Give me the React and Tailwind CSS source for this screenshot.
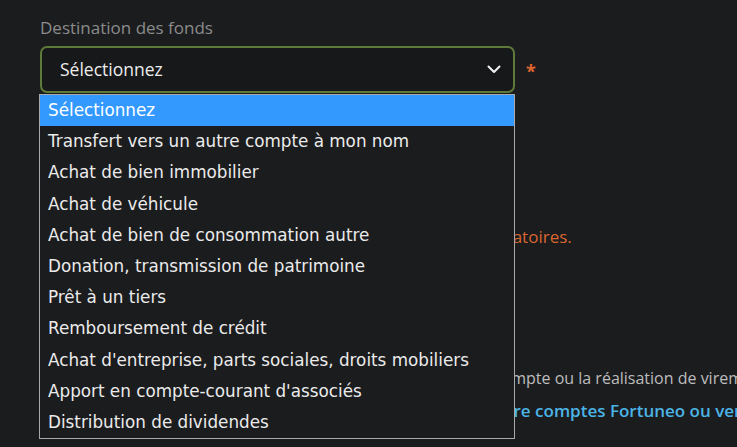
import React from "react";

const options = [
  "Sélectionnez",
  "Transfert vers un autre compte à mon nom",
  "Achat de bien immobilier",
  "Achat de véhicule",
  "Achat de bien de consommation autre",
  "Donation, transmission de patrimoine",
  "Prêt à un tiers",
  "Remboursement de crédit",
  "Achat d'entreprise, parts sociales, droits mobiliers",
  "Apport en compte-courant d'associés",
  "Distribution de dividendes",
];

export default function App() {
  return (
    <div
      className="relative w-[737px] h-[447px] overflow-hidden bg-[#1b1c1e] text-[#e6e6e6]"
      style={{ fontFamily: '"Open Sans", "Noto Sans", sans-serif' }}
    >
      <div className="pl-[40px] pt-[16px]">
        <div className="text-[17px] leading-[24px] text-[#8b8b8b]">Destination des fonds</div>
        <div className="mt-[6px] flex items-center">
          <div className="flex h-[47px] w-[475px] items-center justify-between rounded-[7px] border-2 border-[#5d7a3a] bg-[#17181a]">
            <span className="ml-[18px] text-[17.5px] text-[#ececec]">Sélectionnez</span>
            <svg className="mr-[12px]" width="14" height="9" viewBox="0 0 14 9" fill="none">
              <path d="M1.5 1.5 L7 7 L12.5 1.5" stroke="#f2f2f2" strokeWidth="2" strokeLinecap="round" strokeLinejoin="round" />
            </svg>
          </div>
          <span className="ml-[11px] mt-[3px] text-[18px] font-bold text-[#e0652e]">*</span>
        </div>
        <div className="mt-[132px] text-[17px] leading-[24px] text-[#d8662f] whitespace-nowrap">
          Attention, tous les champs munis d'un astérisque sont obligatoires.
        </div>
        <div className="mt-[117px] text-[16px] leading-[24px] text-[#bdbdbd] whitespace-nowrap">
          Ce service en ligne reste indispensable pour l'ouverture d'un compte ou la réalisation de virements
        </div>
        <div className="mt-[9px] text-[17px] leading-[24px] font-semibold text-[#4bb4e6] whitespace-nowrap">
          Découvrez ici les plafonds applicables à vos virements entre comptes Fortuneo ou vers un tiers
        </div>
      </div>

      <ul
        className="absolute left-[39px] top-[94px] w-[476px] border border-[#a9a9a9] bg-[#1b1c1e]"
        style={{ fontFamily: '"DejaVu Sans", Verdana, sans-serif' }}
      >
        {options.map((o, i) => (
          <li
            key={o}
            className={
              i === 0
                ? "h-[31.2px] flex items-center pl-[8px] text-[16.8px] bg-[#3399ff] text-white"
                : "h-[31.2px] flex items-center pl-[8px] text-[16.8px] text-[#ebebeb]"
            }
          >
            {o}
          </li>
        ))}
      </ul>
    </div>
  );
}
